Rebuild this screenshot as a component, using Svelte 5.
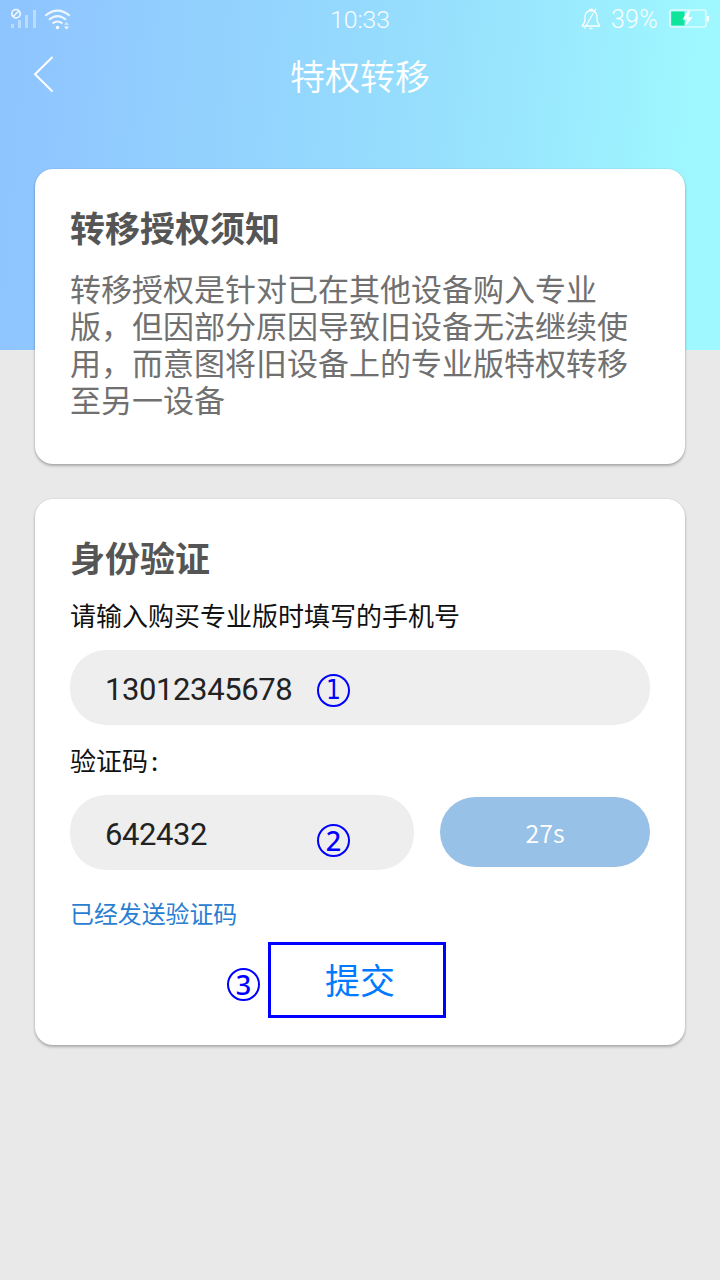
<script>
  const notice = ['转移授权是针对已在其他设备购入专业', '版，但因部分原因导致旧设备无法继续使', '用，而意图将旧设备上的专业版特权转移', '至另一设备'];
  let phone = $state('13012345678');
  let code = $state('642432');
</script>

{#snippet mark(n)}
  <span class="mark m{n}"><b>{n}</b></span>
{/snippet}

<div class="page">
  <header class="hero">
    <div class="status">
      <div class="left">
        <svg width="62" height="30" viewBox="0 0 62 30">
          <g fill="#fff" opacity=".4"><rect x="1" y="23" width="3" height="4"/><rect x="8" y="19" width="3" height="8"/><rect x="15" y="14" width="3" height="13"/><rect x="23" y="9" width="3" height="18"/></g>
          <g fill="none" stroke="#fff" opacity=".9"><circle cx="6" cy="12.700" r="4.200" stroke-width="1.700"/><path d="M3 15.700 9 9.700" stroke-width="1.500"/></g>
          <g fill="none" stroke="#fff" stroke-width="2.100" opacity=".85"><path d="M35.300 14.700Q47.500 4.500 59.700 14.700M39 18.700Q47.500 11.500 56 18.700M42.500 22.500Q47.500 18.500 52.500 22.500"/></g>
          <circle cx="47.500" cy="26.500" r="1.700" fill="#fff"/>
          <path d="M54 24 56.500 20.500 59 24Z" fill="#fff" opacity=".5"/><path d="M54 25.500H59L56.500 28.500Z" fill="#fff" opacity=".9"/>
        </svg>
      </div>
      <span class="time">10:33</span>
      <div class="right">
        <svg width="22" height="24" viewBox="0 0 22 24" fill="none" stroke="#fff" stroke-width="1.300">
          <path d="M1.500 18V17Q4 15 4 11V8.500Q4 3.500 10 2.500 16 3.500 16 8.500V11Q16 15 18.500 17V18ZM8.500 2.500V1.500H11.500V2.500M8.500 20.500H11.500M3.500 20.500 15 .5"/>
        </svg>
        <span class="pct">39%</span>
        <svg class="battery" width="40" height="20" viewBox="0 0 40 20">
          <rect x="1" y="1" width="36" height="17" rx="1.500" fill="none" stroke="#fff" stroke-width="1.200"/>
          <path d="M2.200 2.500H15.500V16.500H2.200Z" fill="#08e496"/><path d="M38 7H40V12.500H38Z" fill="#fff"/>
          <path d="M19 1.800 13.500 10.500H18L16.500 17 24 8H19.500L21.500 1.800Z" fill="#fff"/>
        </svg>
      </div>
    </div>
    <nav>
      <svg width="24" height="40" viewBox="0 0 24 40" fill="none" stroke="#fff" stroke-width="2"><path d="M21.500 2 4 19.200 21.500 36.500"/></svg>
      <h1>特权转移</h1>
    </nav>
  </header>

  <main>
    <section class="card notice">
      <h2>转移授权须知</h2>
      <p>{#each notice as line}<span>{line}</span>{/each}</p>
    </section>

    <section class="card verify">
      <h2>身份验证</h2>
      <label for="phone">请输入购买专业版时填写的手机号</label>
      <div class="field">
        <input id="phone" bind:value={phone} />
        {@render mark(1)}
      </div>
      <label class="second" for="code">验证码<span class="colon">:</span></label>
      <div class="row">
        <div class="field short">
          <input id="code" bind:value={code} />
          {@render mark(2)}
        </div>
        <button class="count">27s</button>
      </div>
      <div class="sent">已经发送验证码</div>
      <div class="actions">
        {@render mark(3)}
        <button class="submit">提交</button>
      </div>
    </section>
  </main>
</div>

<style>
  :global(body) { margin: 0; }
  * { box-sizing: border-box; }
  .page { width: 720px; height: 1280px; background: #e9e9e9; font-family: "Noto Sans CJK SC", sans-serif; overflow: hidden; }
  .hero { height: 350px; background: linear-gradient(95deg, #8fc5ff 4%, #97e1fd 62%, #9ff7ff 94%); color: #fff; }
  .status { height: 38px; display: grid; grid-template-columns: 1fr auto 1fr; align-items: center; padding: 0 10px; font: 300 25px/38px Roboto, sans-serif; }
  .left { height: 38px; }
  .left svg { display: block; }
  .time { opacity: .95; font-size: 24.800px; padding-top: 1px; }
  .right { display: flex; justify-content: flex-end; align-items: center; opacity: .95; }
  .pct { margin: 0 11px 0 8px; letter-spacing: .3px; }
  .battery { margin-top: -1px; margin-right: 1px; }
  nav { height: 74px; display: grid; grid-template-columns: 1fr auto 1fr; align-items: center; padding: 0 31px; }
  h1 { margin: 0; font-size: 35px; line-height: 50px; font-weight: 350; }
  main { margin-top: -181px; padding: 0 35px; display: flex; flex-direction: column; gap: 35px; }
  .card { background: #fff; border-radius: 18px; padding: 34px 35px 35px; box-shadow: 0 2px 3px rgba(0,0,0,.26), 0 0 2px rgba(0,0,0,.12); }
  .notice { height: 295px; }
  .verify { height: 546px; }
  h2 { margin: 0; color: #555; font-size: 35px; line-height: 48px; font-weight: 700; }
  p { margin: 18px 0 0; color: #707070; font-size: 31px; line-height: 37px; font-weight: 400; }
  p span { display: block; white-space: nowrap; }
  label { display: block; margin-top: 15px; height: 38px; font-size: 26px; line-height: 38px; color: #111; font-weight: 400; }
  label.second { margin-top: 16px; }
  .colon { margin-left: 3px; }
  .field { margin-top: 16px; height: 75px; background: #eee; border-radius: 36px; display: flex; align-items: center; padding-left: 35px; }
  input { width: 212px; height: 75px; padding: 4px 0 0; border: 0; outline: 0; background: none; color: #222; font: 400 31px Roboto, sans-serif; letter-spacing: -.4px; }
  .mark { flex: none; width: 33px; height: 33px; margin-top: 6px; border: 2px solid #00f; border-radius: 50%; color: #00f; display: flex; align-items: center; justify-content: center; }
  .mark b { font: 500 27px/29px "Noto Sans", sans-serif; }
  .m1 b { font: 400 26px/29px "DejaVu Sans Condensed", "DejaVu Sans", sans-serif; }
  .m2 { margin-top: 16px; }
  .row { display: flex; justify-content: space-between; align-items: flex-start; margin-top: 16px; }
  .short { width: 344px; margin: 0; }
  button { font-family: inherit; padding: 0; }
  .count { width: 210px; height: 70px; margin-top: 2px; border: 0; border-radius: 35px; background: #98c1e7; color: #fff; font-size: 25px; font-weight: 350; }
  .sent { margin-top: 24px; height: 38px; line-height: 38px; color: #2a7ed2; font-size: 23.900px; }
  .actions { display: flex; align-items: center; margin: 10px 0 0 157px; gap: 8px; }
  .actions .mark { margin-top: 8px; }
  .submit { width: 178px; height: 76px; border: 3px solid #00f; background: #fff; color: #007aff; font-size: 35px; padding: 0 0 3px 6px; }
</style>
